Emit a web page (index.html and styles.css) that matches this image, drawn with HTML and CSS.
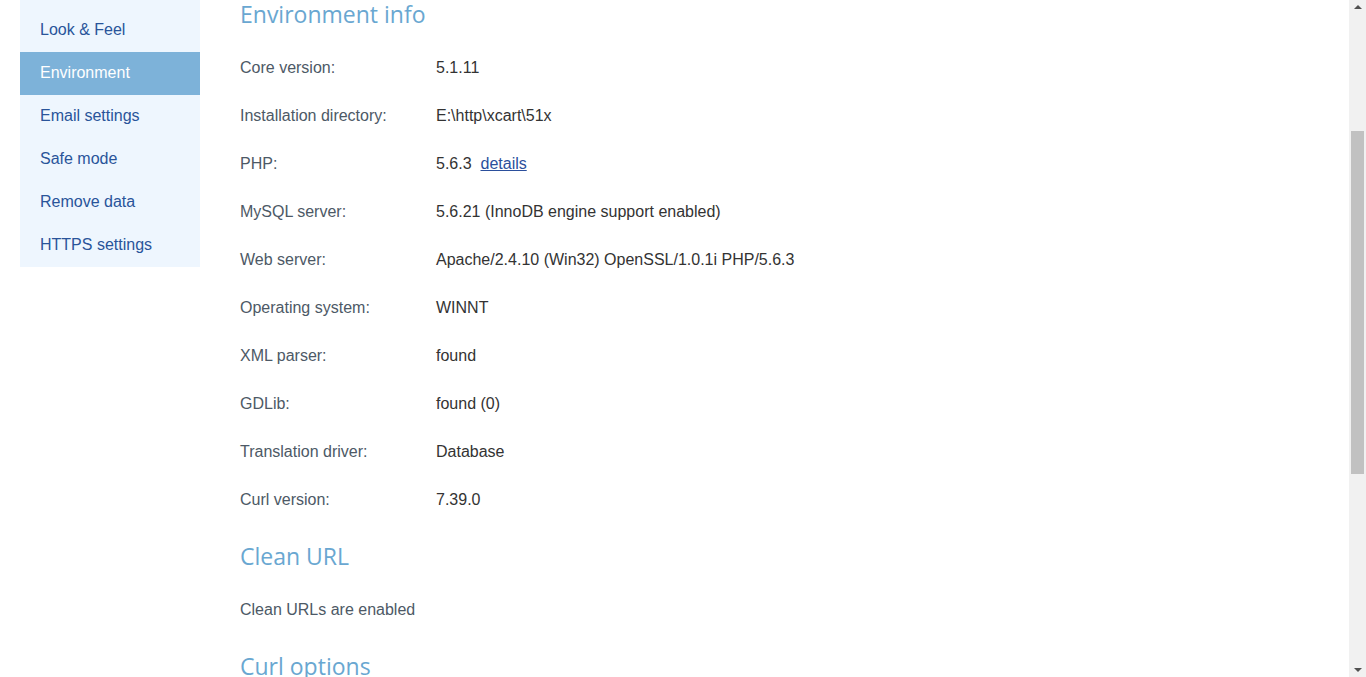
FILE: index.html
```html
<!DOCTYPE html>
<html lang="en">
<head>
    <meta charset="UTF-8">
    <title>Environment</title>
    <link rel="stylesheet" href="styles.css">
</head>
<body>
<div class="page">
  <div class="layout">
    <ul class="sidebar">
      <li><a href="#">Look &amp; Feel</a></li>
      <li class="active"><a href="#">Environment</a></li>
      <li><a href="#">Email settings</a></li>
      <li><a href="#">Safe mode</a></li>
      <li><a href="#">Remove data</a></li>
      <li><a href="#">HTTPS settings</a></li>
    </ul>

    <div class="content">
      <h2>Environment info</h2>
      <table class="env">
        <tr><td class="label">Core version:</td><td>5.1.11</td></tr>
        <tr><td class="label">Installation directory:</td><td>E:\http\xcart\51x</td></tr>
        <tr><td class="label">PHP:</td><td>5.6.3 &nbsp;<a href="#">details</a></td></tr>
        <tr><td class="label">MySQL server:</td><td>5.6.21 (InnoDB engine support enabled)</td></tr>
        <tr><td class="label">Web server:</td><td>Apache/2.4.10 (Win32) OpenSSL/1.0.1i PHP/5.6.3</td></tr>
        <tr><td class="label">Operating system:</td><td>WINNT</td></tr>
        <tr><td class="label">XML parser:</td><td>found</td></tr>
        <tr><td class="label">GDLib:</td><td>found (0)</td></tr>
        <tr><td class="label">Translation driver:</td><td>Database</td></tr>
        <tr><td class="label">Curl version:</td><td>7.39.0</td></tr>
      </table>

      <h2 class="clean">Clean URL</h2>
      <p class="note">Clean URLs are enabled</p>

      <h2 class="curl">Curl options</h2>
    </div>
  </div>

  <div class="scrollbar">
    <span class="arrow up"></span>
    <div class="track"><div class="thumb"></div></div>
    <span class="arrow down"></span>
  </div>
</div>
</body>
</html>
```

FILE: styles.css
```css
html, body {
  margin: 0;
  height: 100%;
  overflow: hidden;
  background: #fff;
}

body {
  font-family: "Liberation Sans", Arial, sans-serif;
  font-size: 16px;
  color: #333;
}

.page {
  display: flex;
  height: 677px;
}

.layout {
  flex: 1;
  display: flex;
  align-items: flex-start;
  overflow: hidden;
}

/* menu de la izquierda */
.sidebar {
  list-style: none;
  margin: 0 40px 0 20px;
  padding: 9px 0 0 0;
  width: 180px;
  background: #eef6fe;
}

.sidebar li a {
  display: block;
  height: 41px;
  line-height: 41px;
  padding: 0 0 2px 20px;
  color: #29549a;
  text-decoration: none;
}

.sidebar li.active a {
  background: #7db2d9;
  color: #fff;
}

.content {
  flex: 1;
}

h2 {
  font-family: "Open Sans", sans-serif;
  font-weight: normal;
  font-size: 23px;
  line-height: 28px;
  color: #69a7d1;
  margin: 0;
}

.env {
  border-collapse: collapse;
  margin-top: 16px;
}

.env td {
  height: 48px;
  padding: 0;
  vertical-align: middle;
  line-height: 18px;
}

.env td.label {
  width: 196px;
  color: #4d5966;
}

.env a {
  color: #2b4f9c;
}

h2.clean {
  margin-top: 18px;
}

.note {
  margin: 31px 0 0 0;
  line-height: 18px;
  color: #4d5966;
}

h2.curl {
  margin-top: 33px;
}

/* barra de desplazamiento */
.scrollbar {
  width: 17px;
  background: #f1f1f1;
  display: flex;
  flex-direction: column;
  align-items: center;
}

.arrow {
  width: 0;
  height: 0;
  border-left: 4px solid transparent;
  border-right: 4px solid transparent;
}

.arrow.up {
  margin-top: 5px;
  border-bottom: 4px solid #505050;
}

.arrow.down {
  margin-bottom: 5px;
  border-top: 4px solid #505050;
}

.track {
  flex: 1;
  width: 100%;
}

.thumb {
  margin: 122px 0 0 2px;
  width: 13px;
  height: 343px;
  background: #c1c1c1;
}
```
